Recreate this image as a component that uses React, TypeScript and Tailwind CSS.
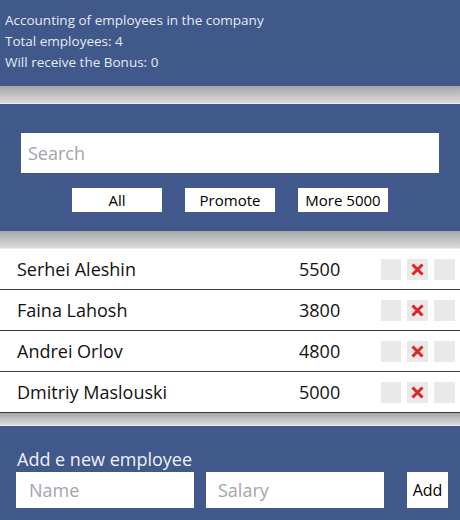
import React from 'react';

const employees = [
  { name: 'Serhei Aleshin', salary: 5500 },
  { name: 'Faina Lahosh', salary: 3800 },
  { name: 'Andrei Orlov', salary: 4800 },
  { name: 'Dmitriy Maslouski', salary: 5000 },
];

const Gap = ({ h }: { h: string }) => (
  <div className={`${h} bg-linear-to-b from-[#a6a6a6] to-[#dcdcdc] border-b border-[#ececec]`} />
);

const App = () => {
  return (
    <div className="w-[460px] h-[520px] flex flex-col font-['Open_Sans',sans-serif] bg-white">
      <header className="h-[86px] shrink-0 bg-[#41588a] px-[5px] pt-[10px] text-[13.5px] leading-[21px] text-[#e6eaf3]">
        <p>Accounting of employees in the company</p>
        <p>Total employees: 4</p>
        <p>Will receive the Bonus: 0</p>
      </header>
      <Gap h="h-[18px]" />
      <section className="h-[127px] shrink-0 bg-[#41588a] px-[21px] pt-[29px]">
        <input
          placeholder="Search"
          className="w-full h-[40px] bg-white px-[7px] text-[18px] outline-none placeholder:text-[#a4a4ac]"
        />
        <div className="flex justify-center gap-[23px] mt-[15px]">
          {['All', 'Promote', 'More 5000'].map((b) => (
            <button key={b} className="w-[90px] h-[24px] bg-white text-[15px] leading-none text-black">
              {b}
            </button>
          ))}
        </div>
      </section>
      <Gap h="h-[18px]" />
      <ul>
        {employees.map((e) => (
          <li key={e.name} className="h-[41px] flex items-center border-b border-[#3a3a3a] pl-[17px] text-[18px] text-[#111]">
            <span className="w-[282px]">{e.name}</span>
            <span className="w-[82px]">{e.salary}</span>
            <div className="flex gap-[6px]">
              <button className="w-[20px] h-[21px] bg-[#e9e9e9]" />
              <button className="w-[21px] h-[21px] bg-[#e9e9e9] flex items-center justify-center">
                <svg width="13" height="13" viewBox="0 0 13 13">
                  <path d="M1.5 1.5 L11.5 11.5 M11.5 1.5 L1.5 11.5" stroke="#e02424" strokeWidth="3" />
                </svg>
              </button>
              <button className="w-[21px] h-[21px] bg-[#e9e9e9]" />
            </div>
          </li>
        ))}
      </ul>
      <Gap h="h-[13px]" />
      <footer className="flex-1 bg-[#41588a] pl-[16px] pr-[12px] pt-[21px]">
        <h3 className="text-[18px] leading-[24px] text-[#eef1f7] pl-px">Add e new employee</h3>
        <div className="flex items-center mt-[1px]">
          <input
            placeholder="Name"
            className="w-[178px] h-[36px] shrink-0 bg-white px-[13px] text-[18px] outline-none placeholder:text-[#a4a4ac]"
          />
          <input
            placeholder="Salary"
            className="w-[178px] h-[36px] shrink-0 ml-[12px] bg-white px-[12px] text-[18px] outline-none placeholder:text-[#a4a4ac]"
          />
          <button className="w-[41px] h-[36px] shrink-0 ml-[23px] bg-white text-[16px] text-black">Add</button>
        </div>
      </footer>
    </div>
  );
};

export default App;
